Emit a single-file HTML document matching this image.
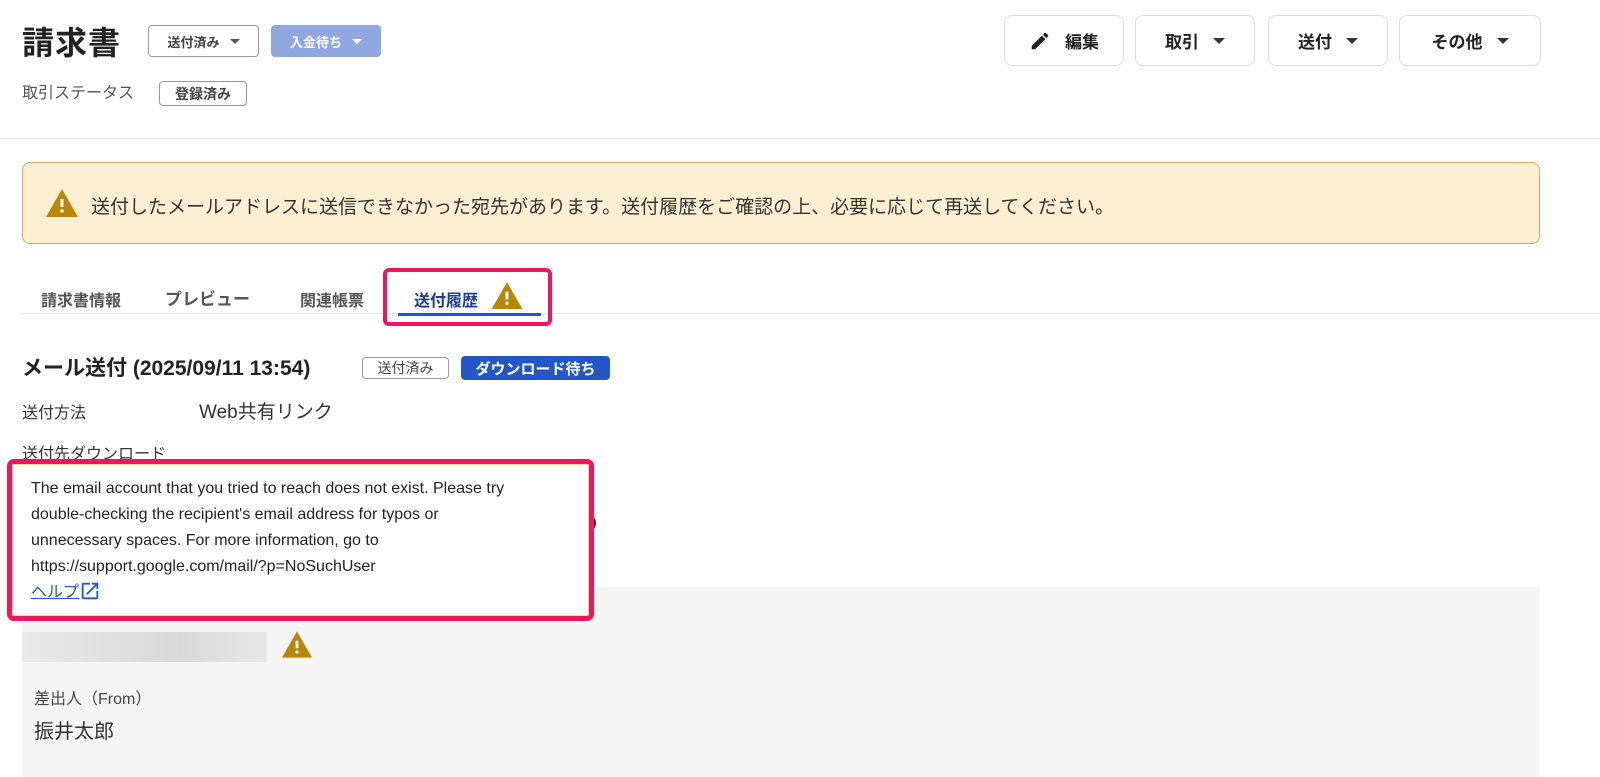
<!DOCTYPE html>
<html><head><meta charset="utf-8"><style>
*{box-sizing:border-box;margin:0;padding:0}
body{width:1600px;height:777px;overflow:hidden;background:#fff;font-family:"Liberation Sans","Noto Sans CJK JP",sans-serif;color:#222;position:relative}
.a{position:absolute}
.tag{position:absolute;border:1px solid #999;border-radius:4px;font-size:13px;font-weight:bold;color:#444;display:flex;align-items:center;justify-content:center}
.btn{position:absolute;top:15px;height:51px;border:1px solid #ddd;border-radius:8px;display:flex;align-items:center;justify-content:center;font-size:17px;font-weight:bold;color:#222;gap:14px}
.tri{width:0;height:0;border-left:6px solid transparent;border-right:6px solid transparent;border-top:6px solid #333;display:inline-block}
.warn{position:absolute}
</style></head><body>
<div class="a" style="left:22px;top:18px;font-size:32px;font-weight:bold;letter-spacing:1px">請求書</div>
<div class="tag" style="left:148px;top:25px;width:111px;height:32px;gap:10px">送付済み <span class="tri" style="border-top-color:#555;border-left-width:5px;border-right-width:5px;border-top-width:5px"></span></div>
<div class="tag" style="left:271px;top:25px;width:110px;height:32px;background:#8fa8df;border-color:#8fa8df;color:#fff;gap:10px">入金待ち <span class="tri" style="border-top-color:#fff;border-left-width:5px;border-right-width:5px;border-top-width:5px"></span></div>
<div class="a" style="left:22px;top:79px;font-size:16px;color:#555">取引ステータス</div>
<div class="tag" style="left:159px;top:81px;width:88px;height:25px;font-size:14px">登録済み</div>

<div class="btn" style="left:1004px;width:120px"><svg width="22" height="22" viewBox="0 0 24 24"><path d="M3 17.25V21h3.75L17.81 9.94l-3.75-3.75L3 17.25zM20.71 7.04a1 1 0 000-1.41l-2.34-2.34a1 1 0 00-1.41 0l-1.83 1.83 3.75 3.75 1.83-1.83z" fill="#222"/></svg>編集</div>
<div class="btn" style="left:1135px;width:120px">取引 <span class="tri"></span></div>
<div class="btn" style="left:1268px;width:120px">送付 <span class="tri"></span></div>
<div class="btn" style="left:1399px;width:142px">その他 <span class="tri"></span></div>

<div class="a" style="left:0;top:138px;width:1600px;height:1px;background:#e6e6e6"></div>

<div class="a" style="left:22px;top:162px;width:1518px;height:82px;background:#fdefd2;border:1px solid #d9a857;border-radius:8px"></div>
<svg class="warn" style="left:45px;top:188px" width="34" height="30" viewBox="0 0 34 30"><path d="M17 1L33 29H1z" fill="#b8860b"/><rect x="15.5" y="11" width="3" height="8" fill="#fff"/><rect x="15.5" y="21.5" width="3" height="3" fill="#fff"/></svg>
<div class="a" style="left:91px;top:192px;font-size:19px;color:#333">送付したメールアドレスに送信できなかった宛先があります。送付履歴をご確認の上、必要に応じて再送してください。</div>

<div class="a" style="left:41px;top:287px;font-size:16px;font-weight:bold;color:#555">請求書情報</div>
<div class="a" style="left:165px;top:285px;font-size:17px;font-weight:bold;color:#555">プレビュー</div>
<div class="a" style="left:300px;top:287px;font-size:16px;font-weight:bold;color:#555">関連帳票</div>
<div class="a" style="left:20px;top:313px;width:1580px;height:1px;background:#e6e6e6"></div>
<div class="a" style="left:383px;top:268px;width:169px;height:58px;border:4px solid #f4145a;border-radius:6px"></div>
<div class="a" style="left:414px;top:287px;font-size:16px;font-weight:bold;color:#1a3d8f">送付履歴</div>
<svg class="warn" style="left:490px;top:281px" width="34" height="29" viewBox="0 0 34 30"><path d="M17 1L33 29H1z" fill="#b8860b"/><rect x="15.5" y="11" width="3" height="8" fill="#fff"/><rect x="15.5" y="21.5" width="3" height="3" fill="#fff"/></svg>
<div class="a" style="left:398px;top:313px;width:143px;height:3px;background:#1f55d6"></div>

<div class="a" style="left:22px;top:352px;font-size:21px;font-weight:bold">メール送付 (2025/09/11 13:54)</div>
<div class="tag" style="left:362px;top:357px;width:87px;height:22px;font-size:14px;font-weight:normal">送付済み</div>
<div class="tag" style="left:461px;top:356px;width:149px;height:24px;font-size:15px;background:#2457c5;border-color:#2457c5;color:#fff">ダウンロード待ち</div>
<div class="a" style="left:22px;top:399px;font-size:16px;color:#333">送付方法</div>
<div class="a" style="left:199px;top:397px;font-size:19px;color:#333">Web共有リンク</div>
<div class="a" style="left:22px;top:440px;font-size:16px;color:#333">送付先ダウンロード</div>
<div class="a" style="left:586px;top:516px;width:10px;height:14px;border-radius:50%;border-right:2px solid #333"></div>

<div class="a" style="left:22px;top:587px;width:1518px;height:190px;background:#f6f5f5"></div>
<div class="a" style="left:22px;top:632px;width:245px;height:30px;background:linear-gradient(90deg,#e8e8e8,#dcdcdc 40%,#d6d6d6 65%,#e6e6e6);opacity:.9"></div>
<svg class="warn" style="left:281px;top:630px" width="32" height="29" viewBox="0 0 34 30"><path d="M17 1L33 29H1z" fill="#b8860b"/><rect x="15.5" y="11" width="3" height="8" fill="#fff"/><rect x="15.5" y="21.5" width="3" height="3" fill="#fff"/></svg>
<div class="a" style="left:34px;top:685px;font-size:16px;color:#444">差出人（From）</div>
<div class="a" style="left:34px;top:715px;font-size:20px;color:#333">振井太郎</div>

<div class="a" style="left:7px;top:459px;width:587px;height:162px;border:5px solid #f4145a;border-radius:7px;background:#fff">
<div style="position:absolute;inset:0;border:1px solid #f0d9a6;border-radius:4px"></div>
<div style="position:absolute;left:19px;top:12px;width:535px;font-size:16px;line-height:26px;color:#222">The email account that you tried to reach does not exist. Please try<br>double-checking the recipient's email address for typos or<br>unnecessary spaces. For more information, go to<br>https://support.google.com/mail/?p=NoSuchUser<br><span style="color:#1f55d6;text-decoration:underline">ヘルプ</span><svg width="22" height="22" viewBox="0 0 24 24" style="vertical-align:-5px"><path d="M19 19H5V5h7V3H5a2 2 0 00-2 2v14a2 2 0 002 2h14a2 2 0 002-2v-7h-2v7zM14 3v2h3.59l-9.83 9.83 1.41 1.41L19 6.41V10h2V3h-7z" fill="#1f55d6"/></svg></div>
</div>
</body></html>
